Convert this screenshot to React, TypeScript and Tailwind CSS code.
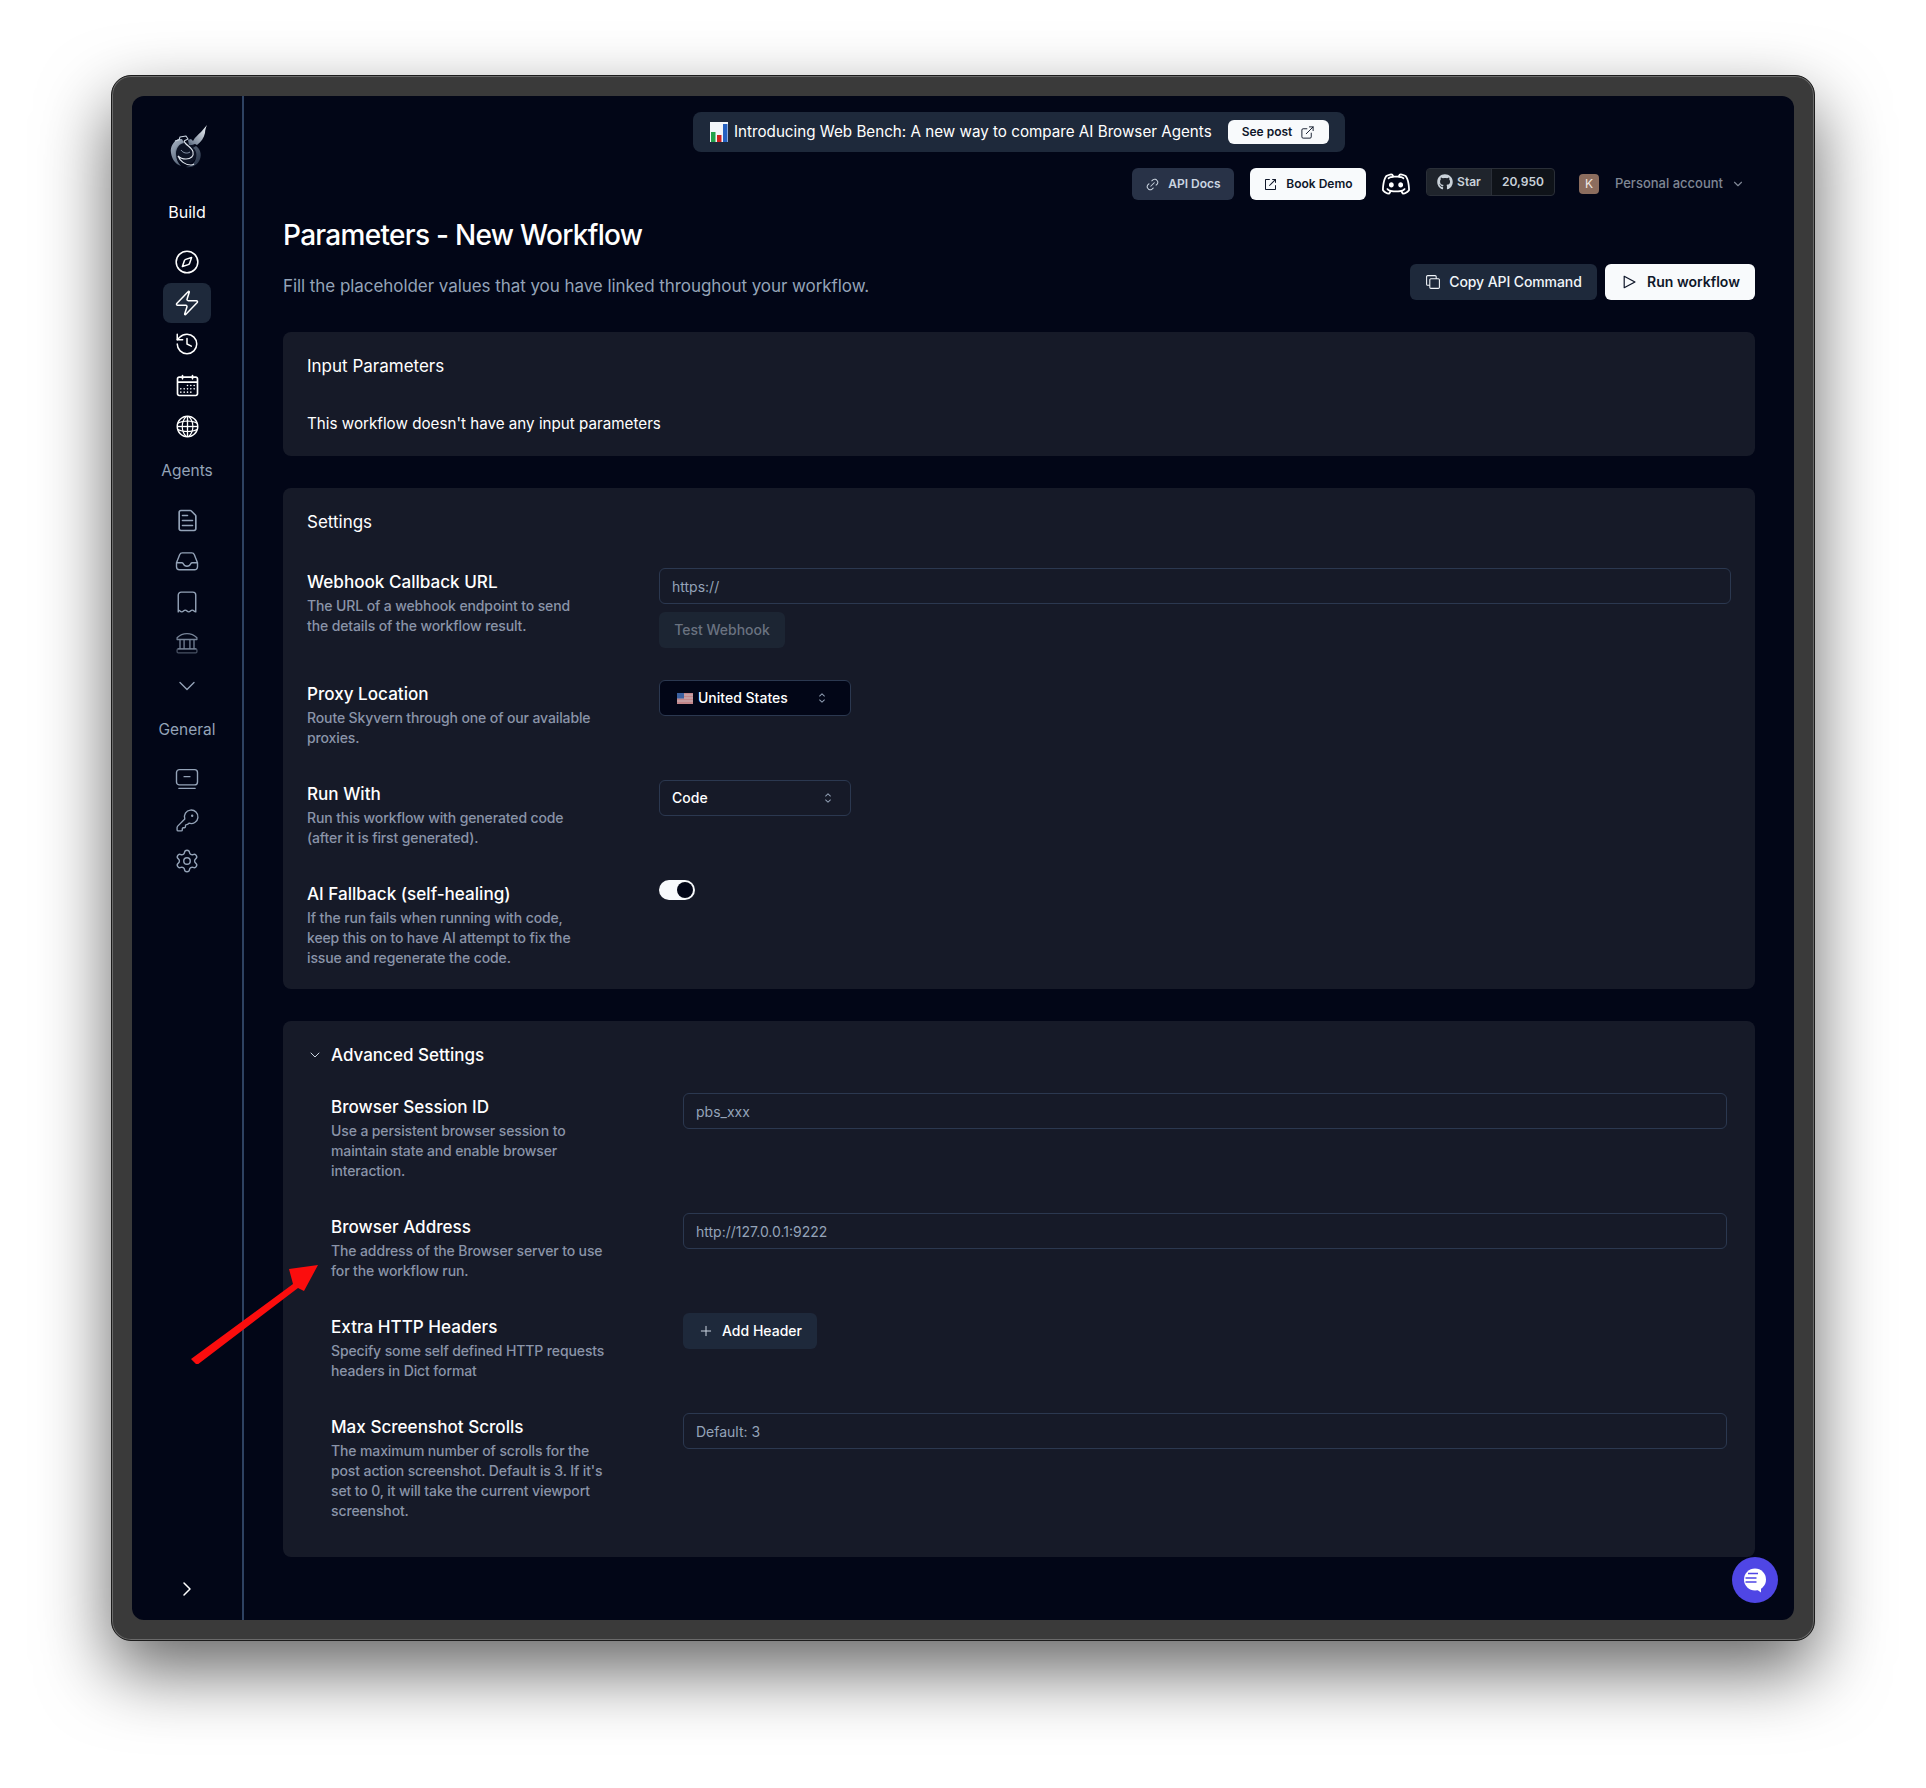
import { ChevronDown, ChevronRight, Compass, ExternalLink, KeyRound, Plus, Settings, History, Zap } from "lucide-react";
import { FaGithub } from "react-icons/fa";
import { RxCalendar, RxCaretSort, RxCopy, RxDiscordLogo, RxExternalLink, RxFileText, RxGlobe, RxLink2, RxPlay } from "react-icons/rx";
import type { ReactNode } from "react";

const Logo = () => (
  <svg width="37" height="44" viewBox="0 0 37 44" fill="none">
    <defs>
      <linearGradient id="wing" x1="36" y1="0" x2="16" y2="20" gradientUnits="userSpaceOnUse">
        <stop offset="0" stopColor="#f1f5f9" />
        <stop offset="1" stopColor="#56657c" />
      </linearGradient>
      <linearGradient id="body" x1="4" y1="14" x2="28" y2="42" gradientUnits="userSpaceOnUse">
        <stop offset="0" stopColor="#a3afc0" />
        <stop offset="1" stopColor="#2c3a50" />
      </linearGradient>
    </defs>
    {/* wing */}
    <path d="M37 0c-1 2-2 5-2 8-1 5-4 9-8 12l-2-1c-2 1-4 1-6 1l-1-5 3-1 2 2c2-4 5-6 8-9 2-2 4-5 6-7z" fill="url(#wing)" />
    {/* coil */}
    <path d="M8 14C3 17 0 22 1 28c1 6 4 11 10 13-3-3-5-7-5-12 0-6 3-10 8-11l-2-4z" fill="url(#body)" />
    <path d="M26 21c4 3 6 8 4 13-2 6-8 9-14 8 5-1 9-4 10-9 1-4 0-8-3-10l3-2z" fill="url(#body)" opacity="0.8" />
    <circle cx="16" cy="28" r="11" fill="#3c4a60" opacity="0.2" />
    <path d="M14 16c1 4 8 6 9 11 1 4-2 7-7 7-3 0-6-1-8-3 2 5 7 9 13 9 1 0 2 0 3-1" stroke="#e2e8f0" strokeWidth="1.1" />
    <path d="M5 16l4-1 1-3 6-1 2 3-4 2" stroke="#cbd5e1" strokeWidth="1.1" strokeLinejoin="round" />
    <path d="M11 25c2 3 6 4 9 2" stroke="#94a3b8" strokeWidth="0.9" />
  </svg>
);

const InboxIcon = () => (
  <svg className="size-7" viewBox="0 0 24 24" fill="none" stroke="currentColor" strokeWidth="1.2" strokeLinejoin="round">
    <path d="M3 13.500V17a2.500 2.500 0 0 0 2.500 2.500h13A2.500 2.500 0 0 0 21 17v-3.500L18.300 6.600A2.500 2.500 0 0 0 16 5H8a2.500 2.500 0 0 0-2.300 1.600L3 13.500z" />
    <path d="M3 13.500h4.500c.6 0 1 .3 1.300.8.6 1.400 1.800 2.200 3.200 2.200s2.600-.8 3.200-2.200c.3-.5.7-.8 1.300-.8H21" />
  </svg>
);

const ReceiptIcon = () => (
  <svg className="size-7" viewBox="0 0 24 24" fill="none" stroke="currentColor" strokeWidth="1.2" strokeLinejoin="round">
    <path d="M4.500 20.500V6A2.500 2.500 0 0 1 7 3.500h10A2.500 2.500 0 0 1 19.500 6v14.500c-1.500 0-1.500-1.500-3-1.500s-1.500 1.500-3 1.500-1.500-1.500-3-1.500-1.500 1.500-3 1.500-1.500-1.500-3-1.500z" />
  </svg>
);

const BankIcon = () => (
  <svg className="size-7 opacity-80" viewBox="0 0 24 24" fill="none" stroke="currentColor" strokeWidth="1.1" strokeLinejoin="round">
    <path d="M3.500 7.500C6 5 9 4 12 4s6 1 8.500 3.500v1.500h-17z" />
    <path d="M6 9v8M9.500 9v8M14.500 9v8M18 9v8M4 17h16" />
    <rect x="3.500" y="17" width="17" height="3.500" rx="1" opacity="0.6" />
  </svg>
);

const MonitorMinusIcon = () => (
  <svg className="size-7" viewBox="0 0 24 24" fill="none" stroke="currentColor" strokeWidth="1.2" strokeLinecap="round">
    <rect x="3" y="4" width="18" height="13" rx="2.500" />
    <path d="M9.500 10h5M5 20h14" />
  </svg>
);

const ChartEmoji = () => (
  <svg width="18" height="20" viewBox="0 0 18 20">
    <rect width="18" height="20" fill="#f1f5f9" />
    <rect x="1" y="10" width="4.500" height="10" fill="#22a04a" />
    <rect x="7" y="13" width="4.500" height="7" fill="#cc2020" />
    <rect x="13" y="2" width="4.500" height="18" fill="#2460c0" />
  </svg>
);

const Flag = () => (
  <svg width="16" height="11" viewBox="0 0 16 11" className="opacity-80">
    <rect width="16" height="11" fill="#f3a6a6" />
    <path d="M0 2h16M0 5h16M0 8h16" stroke="#fbe4e4" strokeWidth="1" />
    <rect width="7" height="5.500" fill="#4a78c4" />
  </svg>
);

const ChatIcon = () => (
  <svg width="24" height="25" viewBox="0 0 24 25">
    <circle cx="12" cy="11.500" r="11" fill="#ffffff" />
    <path d="M13 21l5 3.500v-6z" fill="#ffffff" />
    <path d="M5 6h10M2.500 10.500h11M2.500 14.500h11" stroke="#4f46e5" strokeWidth="1.600" transform="translate(0 -0.500)" />
  </svg>
);

const SideIcon = ({ children, active }: { children: ReactNode; active?: boolean }) => (
  <div className={active ? "flex h-10 w-12 items-center justify-center rounded-lg bg-[#1e293b]" : "flex h-10 w-12 items-center justify-center"}>
    {children}
  </div>
);

const Field = ({ title, children, desc }: { title: string; children: ReactNode; desc: string }) => (
  <div className="flex gap-16">
    <div className="w-72 shrink-0">
      <h3 className="text-[17.1px] font-medium leading-7 text-white">{title}</h3>
      <p className="max-w-[286px] text-sm font-medium leading-5 tracking-[-0.12px] text-[#8a94a8]">{desc}</p>
    </div>
    <div className="min-w-0 flex-1">{children}</div>
  </div>
);

const TextInput = ({ placeholder }: { placeholder: string }) => (
  <input
    placeholder={placeholder}
    className="h-9 w-full rounded-md border border-[#2b3850] bg-transparent px-3 text-sm text-white outline-none placeholder:text-[#94a3b8]"
  />
);

export default function App() {
  return (
    <div className="h-[1788px] w-[1926px] overflow-hidden bg-white pl-[111px] pt-[75px] font-['Inter',sans-serif]">
      <div className="h-[1566px] w-[1704px] rounded-[20px] border border-[#1c1c1c] bg-[#3a3a3a] p-[20px] shadow-[inset_0_0_0_1px_#6a6a6a,0_30px_70px_rgba(0,0,0,0.6)]">
        <div className="relative flex h-[1524px] overflow-hidden rounded-[12px] bg-[#020617]">
          <aside className="flex w-[112px] shrink-0 flex-col items-center border-r-2 border-[#2e4262]">
            <div className="ml-[2px] mt-[29px] h-[44px]">
              <Logo />
            </div>
            <div className="mb-[18px] mt-[31px] h-6 text-base leading-6 text-white">Build</div>
            <div className="flex flex-col gap-px text-white">
              <SideIcon><Compass className="size-[26px]" strokeWidth={1.4} /></SideIcon>
              <SideIcon active><Zap className="size-7" strokeWidth={1.3} /></SideIcon>
              <SideIcon><History className="size-[26px]" strokeWidth={1.4} /></SideIcon>
              <SideIcon><RxCalendar className="size-[25px]" /></SideIcon>
              <SideIcon><RxGlobe className="size-[25px]" /></SideIcon>
            </div>
            <div className="mb-[17px] mt-[13px] h-6 text-[15.5px] leading-6 text-[#94a3b8]">Agents</div>
            <div className="flex flex-col gap-px text-[#94a3b8]">
              <SideIcon><RxFileText className="size-[25px]" /></SideIcon>
              <SideIcon><InboxIcon /></SideIcon>
              <SideIcon><ReceiptIcon /></SideIcon>
              <SideIcon><BankIcon /></SideIcon>
              <div className="mt-[2px]">
                <SideIcon><ChevronDown className="size-7" strokeWidth={1.2} /></SideIcon>
              </div>
            </div>
            <div className="mb-[17px] mt-[12px] h-6 text-[15.5px] leading-6 text-[#94a3b8]">General</div>
            <div className="flex flex-col gap-px text-[#94a3b8]">
              <SideIcon><MonitorMinusIcon /></SideIcon>
              <SideIcon><KeyRound className="size-[25px]" strokeWidth={1.3} /></SideIcon>
              <SideIcon><Settings className="size-[26px]" strokeWidth={1.3} /></SideIcon>
            </div>
            <div className="mb-[11px] mt-auto text-white">
              <SideIcon><ChevronRight className="size-6" strokeWidth={1.5} /></SideIcon>
            </div>
          </aside>

          <main className="min-w-0 flex-1 pl-[39px] pr-[39px] pt-4">
            <div className="flex justify-center">
              <div className="flex h-10 w-[652px] items-center justify-between rounded-lg bg-[#1e293b] pl-[17px] pr-4 text-[15.2px] text-white">
                <div className="flex items-center gap-[6px] whitespace-nowrap">
                  <ChartEmoji />
                  <span>Introducing Web Bench: A new way to compare AI Browser Agents</span>
                </div>
                <button className="flex h-6 w-[101px] items-center justify-center gap-2 rounded-md bg-[#f8fafc] text-xs font-semibold text-[#0f172a]">
                  See post
                  <ExternalLink className="size-[15px]" strokeWidth={1.5} />
                </button>
              </div>
            </div>

            <div className="mt-4 flex h-8 items-center justify-end">
              <button className="flex h-8 w-[102px] items-center justify-center gap-2 rounded-md bg-[#283247] text-xs font-semibold text-[#cbd5e1]">
                <RxLink2 className="size-[15px]" />
                API Docs
              </button>
              <button className="ml-4 flex h-8 w-[116px] items-center justify-center gap-2 rounded-md bg-[#f8fafc] text-xs font-semibold text-[#0f172a]">
                <RxExternalLink className="size-[15px]" />
                Book Demo
              </button>
              <RxDiscordLogo className="ml-4 size-7 text-white" />
              <div className="mb-1 ml-4 flex h-7 w-[129px] rounded border border-[#2a2f38] bg-[#0f1319] text-xs font-semibold text-[#c9d1d9]">
                <div className="flex w-[65px] items-center justify-center gap-1 border-r border-[#2a2f38] bg-[#1f242c]">
                  <FaGithub className="size-4" />
                  Star
                </div>
                <div className="flex flex-1 items-center justify-center">20,950</div>
              </div>
              <div className="ml-6 flex size-5 items-center justify-center rounded bg-[#8c6d5e] text-xs text-[#f1e9e4]">K</div>
              <span className="ml-4 text-[13px] font-medium text-[#7f8694]">Personal account</span>
              <ChevronDown className="ml-2 mr-[10px] size-[14px] text-[#7f8694]" />
            </div>

            <h1 className="mt-[17px] text-[28px] font-medium leading-9 tracking-tight text-white">Parameters - New Workflow</h1>
            <div className="mt-[11px] flex items-end justify-between">
              <p className="text-[17px] leading-7 tracking-[-0.06px] text-[#94a3b8]">
                Fill the placeholder values that you have linked throughout your workflow.
              </p>
              <div className="flex gap-2">
                <button className="flex h-9 w-[187px] items-center justify-center gap-2 rounded-md bg-[#1e293b] text-sm font-medium tracking-[-0.1px] text-[#f1f5f9]">
                  <RxCopy className="size-4" />
                  Copy API Command
                </button>
                <button className="flex h-9 w-[150px] items-center justify-center gap-[9px] rounded-md bg-[#f8fafc] text-sm font-semibold text-[#0f172a]">
                  <RxPlay className="size-[18px]" />
                  Run workflow
                </button>
              </div>
            </div>

            <section className="mt-8 rounded-lg bg-[#161a28] px-6 py-5">
              <h2 className="text-[17px] leading-7 text-white">Input Parameters</h2>
              <p className="mt-8 text-[15.2px] leading-6 text-white">This workflow doesn't have any input parameters</p>
            </section>

            <section className="mt-8 rounded-lg bg-[#161a28] px-6 pb-[21px] pt-5">
              <h2 className="text-[17px] leading-7 text-white">Settings</h2>
              <div className="mt-8 flex flex-col gap-8">
                <Field title="Webhook Callback URL" desc="The URL of a webhook endpoint to send the details of the workflow result.">
                  <TextInput placeholder="https://" />
                  <button className="mt-2 flex h-9 w-[126px] items-center justify-center rounded-md bg-[#1c2533] text-sm font-medium text-[#6a7280]">
                    Test Webhook
                  </button>
                </Field>
                <Field title="Proxy Location" desc="Route Skyvern through one of our available proxies.">
                  <button className="flex h-9 w-48 items-center justify-between rounded-md border border-[#2b3850] bg-[#020617] pl-[17px] pr-[20px] text-sm font-medium text-white">
                    <span className="flex items-center gap-[5px]"><Flag />United States</span>
                    <RxCaretSort className="size-4 text-[#94a3b8]" />
                  </button>
                </Field>
                <Field title="Run With" desc="Run this workflow with generated code (after it is first generated).">
                  <button className="flex h-9 w-48 items-center justify-between rounded-md border border-[#2b3850] pl-3 pr-[14px] text-sm font-medium text-white">
                    Code
                    <RxCaretSort className="size-4 text-[#94a3b8]" />
                  </button>
                </Field>
                <Field
                  title="AI Fallback (self-healing)"
                  desc="If the run fails when running with code, keep this on to have AI attempt to fix the issue and regenerate the code."
                >
                  <div className="flex h-5 w-9 items-center justify-end rounded-full bg-[#f8fafc] pr-[2px]">
                    <div className="size-4 rounded-full bg-[#020617]" />
                  </div>
                </Field>
              </div>
            </section>

            <section className="mt-8 rounded-lg bg-[#161a28] pb-9 pl-6 pr-7 pt-5">
              <div className="flex h-7 items-center gap-2">
                <ChevronDown className="size-4 text-[#cbd5e1]" strokeWidth={1.5} />
                <h2 className="text-[17px] font-medium leading-7 text-white">Advanced Settings</h2>
              </div>
              <div className="mt-6 flex flex-col gap-8 pl-6">
                <Field title="Browser Session ID" desc="Use a persistent browser session to maintain state and enable browser interaction.">
                  <TextInput placeholder="pbs_xxx" />
                </Field>
                <Field title="Browser Address" desc="The address of the Browser server to use for the workflow run.">
                  <TextInput placeholder="http://127.0.0.1:9222" />
                </Field>
                <Field title="Extra HTTP Headers" desc="Specify some self defined HTTP requests headers in Dict format">
                  <button className="flex h-9 w-[134px] items-center justify-center gap-2 rounded-md bg-[#1e293b] text-sm font-medium text-white">
                    <Plus className="size-4 text-[#cbd5e1]" strokeWidth={1.5} />
                    Add Header
                  </button>
                </Field>
                <Field
                  title="Max Screenshot Scrolls"
                  desc="The maximum number of scrolls for the post action screenshot. Default is 3. If it's set to 0, it will take the current viewport screenshot."
                >
                  <TextInput placeholder="Default: 3" />
                </Field>
              </div>
            </section>
          </main>

          {/* chat launcher, pinned over the page */}
          <button className="absolute bottom-[17px] right-[16px] flex size-[46px] items-center justify-center rounded-full bg-[#4f46e5]">
            <ChatIcon />
          </button>

          {/* red annotation arrow drawn on top of the screenshot */}
          <svg className="absolute left-[58px] top-[1168px]" width="130" height="100" viewBox="0 0 130 100">
            <path d="M1 95 L103 20 L99 5 L128 1 L114 27 L108 24 L7 101 Z" fill="#fb0d0d" />
          </svg>
        </div>
      </div>
    </div>
  );
}
